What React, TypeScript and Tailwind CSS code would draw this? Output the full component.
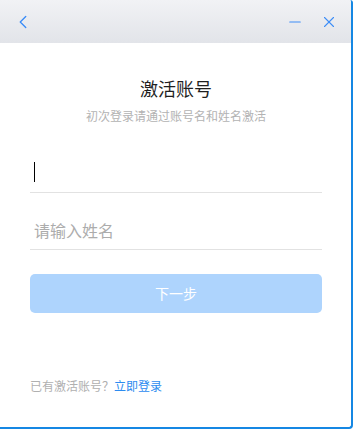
import { ChevronLeft, Minus, X } from "lucide-react";

export default function App() {
    return (
        <div className="w-[353px] h-[429px] overflow-hidden bg-white font-['Noto_Sans_CJK_SC',sans-serif]">
            <div className="w-[353px] h-[429px] flex flex-col border-r-2 border-b-2 border-[#1587e3] rounded-br-[4px] rounded-tr-[3px] overflow-hidden">
                {/* Title bar */}
                <div className="h-[43px] shrink-0 flex items-center justify-between pl-[12px] pr-[13px] bg-gradient-to-b from-[#f1f2f5] to-[#e2e4e9]">
                    <ChevronLeft size={22} strokeWidth={1.5} className="text-[#3e8ef7]" />
                    <div className="flex items-center gap-[16px]">
                        <Minus size={18} strokeWidth={1.5} className="text-[#3e8ef7]" />
                        <X size={18} strokeWidth={1.5} className="text-[#3e8ef7]" />
                    </div>
                </div>

                <div className="flex-1 flex flex-col pl-[30px] pr-[29px]">
                    <h1 className="mt-[32px] text-center text-[18px] leading-[26px] text-[#1f1f1f]">激活账号</h1>
                    <p className="mt-[6px] text-center text-[12px] leading-[18px] text-[#b3b3b3]">初次登录请通过账号名和姓名激活</p>

                    <div className="mt-[31px] h-[37px] flex items-center border-b border-[#e2e2e2]">
                        <span className="ml-[4px] w-px h-[20px] bg-black -mt-[4px]" />
                    </div>
                    <div className="mt-[20px] h-[37px] flex items-center border-b border-[#e2e2e2]">
                        <span className="ml-[4px] text-[16px] text-[#acacac] -mt-[2px]">请输入姓名</span>
                    </div>

                    <button className="mt-[24px] h-[39px] w-full rounded-[5px] bg-[#aed4fd] text-white text-[14px]">下一步</button>

                    <div className="mt-[64px] text-[12px] leading-[18px] text-[#b0b0b0]">
                        已有激活账号？<span className="text-[#2d8cf0]">立即登录</span>
                    </div>
                </div>
            </div>
        </div>
    );
}
